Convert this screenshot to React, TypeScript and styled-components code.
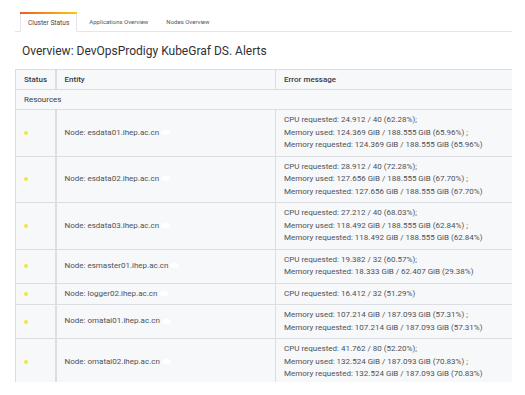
import React from 'react';
import styled, { createGlobalStyle } from 'styled-components';

const GlobalStyle = createGlobalStyle`
	html, body {
		margin: 0;
		padding: 0;
		background: #ffffff;
		font-family: Roboto, 'Liberation Sans', sans-serif;
	}
`;

const Page = styled.div`
	width: 525px;
	height: 395px;
	padding: 11px 13px 0 15px;
	box-sizing: border-box;
	overflow: hidden;
`;

const TabBar = styled.div`
	display: flex;
	align-items: flex-end;
	height: 20px;
	padding-left: 5px;
	border-bottom: 1px solid #e4e5e9;
`;

const Tab = styled.div<{ $active?: boolean }>`
	position: relative;
	height: 20px;
	box-sizing: border-box;
	display: flex;
	align-items: center;
	padding: ${(p) => (p.$active ? '2px 7px 0' : '0 7px')};
	margin-right: ${(p) => (p.$active ? '4px' : '2px')};
	margin-bottom: -1px;
	font-size: ${(p) => (p.$active ? '6.6px' : '6px')};
	color: ${(p) => (p.$active ? '#45474d' : '#52545c')};
	background: ${(p) => (p.$active ? '#ffffff' : 'transparent')};
	border: 1px solid ${(p) => (p.$active ? '#e4e5e9' : 'transparent')};
	border-top: none;
	border-bottom-color: ${(p) => (p.$active ? '#ffffff' : 'transparent')};
	&::before {
		content: '';
		display: ${(p) => (p.$active ? 'block' : 'none')};
		position: absolute;
		top: 0;
		left: -1px;
		right: -1px;
		height: 2px;
		background: linear-gradient(90deg, #f05a28, #fbca0a);
	}
`;

const Title = styled.h1`
	margin: 0;
	padding: 0 0 0 7px;
	height: 37px;
	display: flex;
	align-items: center;
	font-size: 12px;
	font-weight: 400;
	color: #2f3034;
`;

const TableWrap = styled.div`
	height: 313px;
	overflow: hidden;
`;

const Table = styled.table`
	width: 497px;
	border-collapse: collapse;
	table-layout: fixed;
	font-size: 8px;
	color: #4f5157;
`;

const HeadCell = styled.th<{ $w: number; $thick?: boolean }>`
	width: ${(p) => p.$w}px;
	height: 20px;
	box-sizing: border-box;
	padding: 0 8px;
	text-align: left;
	font-weight: 500;
	color: #3a3b40;
	background: #f7f8fa;
	border: 1px solid #dcdde2;
	border-right-width: ${(p) => (p.$thick ? '2px' : '1px')};
`;

const GroupCell = styled.td`
	height: 20px;
	padding: 0 8px;
	box-sizing: border-box;
	background: #f7f8fa;
	border: 1px solid #dcdde2;
	color: #3a3b40;
`;

const Cell = styled.td<{ $thick?: boolean }>`
	padding: 4px 8px;
	line-height: 12.5px;
	vertical-align: middle;
	background: #f7f8f9;
	border: 1px solid #dcdde2;
	border-right-width: ${(p) => (p.$thick ? '2px' : '1px')};
`;

const Dot = styled.span`
	display: block;
	width: 4px;
	height: 4px;
	border-radius: 50%;
	background: #f1e744;
`;

const Eye = styled.span`
	display: inline-block;
	width: 9px;
	height: 5px;
	border-radius: 50%;
	background: #ffffff;
	margin-left: 2px;
	vertical-align: middle;
`;

const rows: { node: string; msg: string[] }[] = [
	{
		node: 'esdata01.ihep.ac.cn',
		msg: [
			'CPU requested: 24.912 / 40 (62.28%);',
			'Memory used: 124.369 GiB / 188.555 GiB (65.96%) ;',
			'Memory requested: 124.369 GiB / 188.555 GiB (65.96%)',
		],
	},
	{
		node: 'esdata02.ihep.ac.cn',
		msg: [
			'CPU requested: 28.912 / 40 (72.28%);',
			'Memory used: 127.656 GiB / 188.555 GiB (67.70%) ;',
			'Memory requested: 127.656 GiB / 188.555 GiB (67.70%)',
		],
	},
	{
		node: 'esdata03.ihep.ac.cn',
		msg: [
			'CPU requested: 27.212 / 40 (68.03%);',
			'Memory used: 118.492 GiB / 188.555 GiB (62.84%) ;',
			'Memory requested: 118.492 GiB / 188.555 GiB (62.84%)',
		],
	},
	{
		node: 'esmaster01.ihep.ac.cn',
		msg: ['CPU requested: 19.382 / 32 (60.57%);', 'Memory requested: 18.333 GiB / 62.407 GiB (29.38%)'],
	},
	{
		node: 'logger02.ihep.ac.cn',
		msg: ['CPU requested: 16.412 / 32 (51.29%)'],
	},
	{
		node: 'omatai01.ihep.ac.cn',
		msg: [
			'Memory used: 107.214 GiB / 187.093 GiB (57.31%) ;',
			'Memory requested: 107.214 GiB / 187.093 GiB (57.31%)',
		],
	},
	{
		node: 'omatai02.ihep.ac.cn',
		msg: [
			'CPU requested: 41.762 / 80 (52.20%);',
			'Memory used: 132.524 GiB / 187.093 GiB (70.83%) ;',
			'Memory requested: 132.524 GiB / 187.093 GiB (70.83%)',
		],
	},
];

export default function App() {
	return (
		<>
			<GlobalStyle />
			<Page>
				<TabBar>
					<Tab $active>Cluster Status</Tab>
					<Tab>Applications Overview</Tab>
					<Tab>Nodes Overview</Tab>
				</TabBar>
				<Title>Overview: DevOpsProdigy KubeGraf DS. Alerts</Title>
				<TableWrap>
					<Table>
						<thead>
							<tr>
								<HeadCell $w={40} $thick>
									Status
								</HeadCell>
								<HeadCell $w={220}>Entity</HeadCell>
								<HeadCell $w={237}>Error message</HeadCell>
							</tr>
						</thead>
						<tbody>
							<tr>
								<GroupCell colSpan={3}>Resources</GroupCell>
							</tr>
							{rows.map((r) => (
								<tr key={r.node}>
									<Cell $thick>
										<Dot />
									</Cell>
									<Cell>
										Node: {r.node}
										<Eye />
									</Cell>
									<Cell>
										{r.msg.map((m) => (
											<div key={m}>{m}</div>
										))}
									</Cell>
								</tr>
							))}
						</tbody>
					</Table>
				</TableWrap>
			</Page>
		</>
	);
}
